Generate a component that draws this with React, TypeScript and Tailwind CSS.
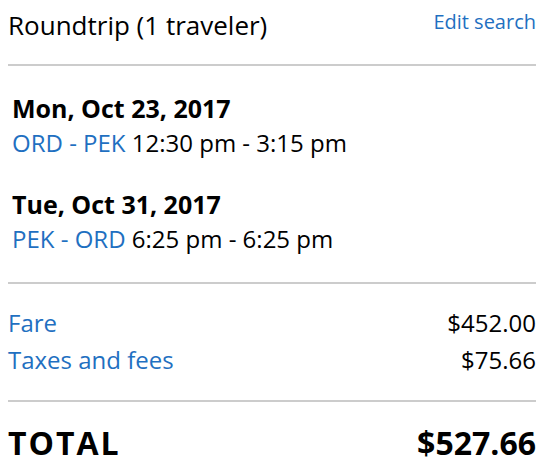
import React from "react";

const blue = "text-[#1f70c1]";

function Leg({ date, route, times }: { date: string; route: string; times: string }) {
  return (
    <div className="pl-[4px]">
      <div className="text-[25px] font-bold leading-[32px]">{date}</div>
      <div className="mt-[3px] text-[24px] leading-[32px]">
        <span className={blue}>{route}</span> {times}
      </div>
    </div>
  );
}

function Line({ label, amount }: { label: string; amount: string }) {
  return (
    <div className="flex items-start justify-between text-[24px] leading-[37px]">
      <span className={blue}>{label}</span>
      <span>{amount}</span>
    </div>
  );
}

export default function App() {
  return (
    <div
      className="min-h-screen bg-white text-black"
      style={{ fontFamily: "'Open Sans', 'Liberation Sans', sans-serif" }}
    >
      <div className="ml-[8px] w-[528px] pt-[9px]">
        <div className="flex items-start justify-between">
          <div className="text-[26px] leading-[32px]">Roundtrip (1 traveler)</div>
          <a href="#" className={`mt-[1px] text-[20px] leading-[24px] ${blue}`}>
            Edit search
          </a>
        </div>

        <div className="mt-[23px] h-[2px] bg-[#cccccc]" />

        <div className="mt-[26px] flex flex-col gap-[29px]">
          <Leg date="Mon, Oct 23, 2017" route="ORD - PEK" times="12:30 pm - 3:15 pm" />
          <Leg date="Tue, Oct 31, 2017" route="PEK - ORD" times="6:25 pm - 6:25 pm" />
        </div>

        <div className="mt-[27px] h-[2px] bg-[#cccccc]" />

        <div className="mt-[20px]">
          <Line label="Fare" amount="$452.00" />
          <Line label="Taxes and fees" amount="$75.66" />
        </div>

        <div className="mt-[22px] h-[2px] bg-[#cccccc]" />

        <div className="mt-[21px] flex items-start justify-between text-[32px] font-bold leading-[40px]">
          <span className="tracking-[2px]">TOTAL</span>
          <span>$527.66</span>
        </div>
      </div>
    </div>
  );
}
